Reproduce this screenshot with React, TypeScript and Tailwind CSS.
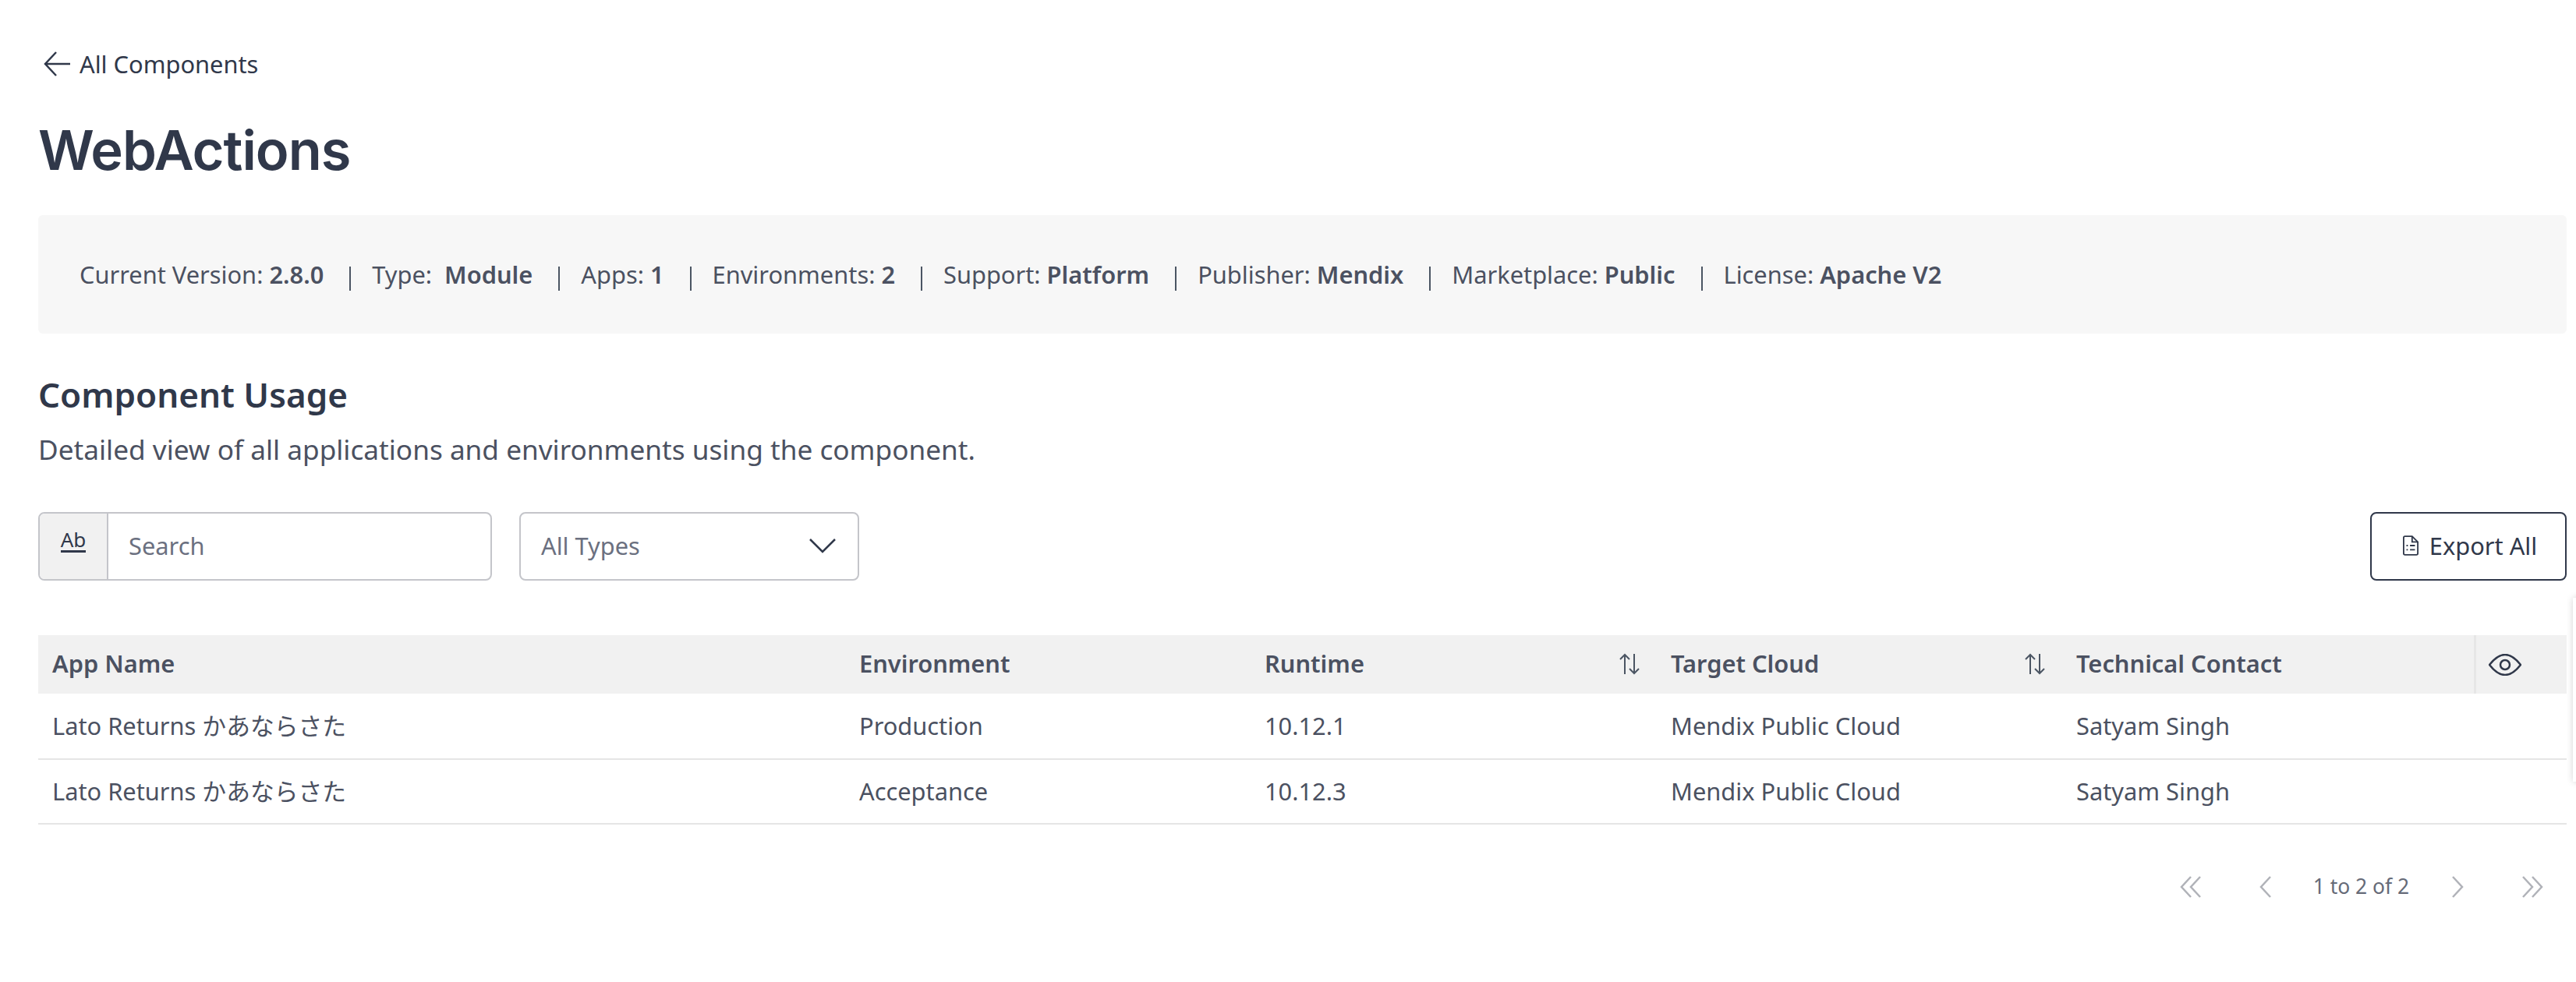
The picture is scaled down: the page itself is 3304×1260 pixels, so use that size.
import React from "react";

const Sep = () => <span className="ml-[33px] mr-[27px] inline-block h-[31px] w-[2px] translate-y-[5px] bg-[#4b5563]" />;

const meta: [string, string][] = [
  ["Current Version: ", "2.8.0"],
  ["Type:  ", "Module"],
  ["Apps: ", "1"],
  ["Environments: ", "2"],
  ["Support: ", "Platform"],
  ["Publisher: ", "Mendix"],
  ["Marketplace: ", "Public"],
  ["License: ", "Apache V2"],
];

const cols = "grid grid-cols-[1037px_520px_521px_520px_526px_119px]";

const SortIcon = () => (
  <svg width="30" height="28" viewBox="0 0 30 28" fill="none" stroke="#4b5563" strokeWidth="2">
    <path d="M9 27V2M3 8l6-6 6 6" />
    <path d="M21 1v25M15 20l6 6 6-6" />
  </svg>
);

const Row = ({ env, rt, first }: { env: string; rt: string; first?: boolean }) => (
  <div className={`${cols} ${first ? "h-[85px]" : "h-[83px]"} items-center border-b-[2px] border-[#e5e5e5] text-[30.8px] text-[#4b5161]`}>
    <div className="pl-[18px]">Lato Returns かあならさた</div>
    <div className="pl-[16px]">{env}</div>
    <div className="pl-[16px]">{rt}</div>
    <div className="pl-[16px]">Mendix Public Cloud</div>
    <div className="pl-[16px]">Satyam Singh</div>
    <div />
  </div>
);

const Pager = ({ d, double }: { d: "l" | "r"; double?: boolean }) => (
  <svg width="28" height="30" viewBox="0 0 28 30" fill="none" stroke="#b0b2b8" strokeWidth="2.5">
    {double ? (
      d === "l" ? (
        <path d="M14 2 2 15l12 13M26 2 14 15l12 13" />
      ) : (
        <path d="m2 2 12 13L2 28M14 2l12 13-12 13" />
      )
    ) : d === "l" ? (
      <path d="M20 2 8 15l12 13" />
    ) : (
      <path d="m8 2 12 13L8 28" />
    )}
  </svg>
);

export default function App() {
  return (
    <div className="relative h-[1260px] w-[3304px] overflow-hidden bg-white pl-[49px] pr-[12px] font-['Noto_Sans','Noto_Sans_CJK_JP',sans-serif] text-[#30384a]">
      <div className="box-content flex h-[44px] items-center pt-[60px]">
        <svg width="38" height="32" viewBox="0 0 38 32" fill="none" stroke="#30384a" strokeWidth="2.5" className="ml-[6px] mr-[9px]">
          <path d="M17 1 3 16l14 15M3 16h32" />
        </svg>
        <span className="text-[30.8px]">All Components</span>
      </div>
      <h1 className="mt-[54px] h-[70px] font-['Inter',sans-serif] text-[70.4px] font-semibold leading-[70px] tracking-[-1px]">WebActions</h1>
      <div className="mt-[48px] flex h-[152px] items-center rounded-[6px] bg-[#f7f7f7] pl-[53px] text-[30.8px] text-[#4b5161] whitespace-pre">
        {meta.map(([k, v], i) => (
          <React.Fragment key={k}>
            {i > 0 && <Sep />}
            <span>{k}<b className="font-semibold">{v}</b></span>
          </React.Fragment>
        ))}
      </div>
      <h2 className="mt-[50px] text-[44px] font-semibold leading-[56px]">Component Usage</h2>
      <p className="mt-[18px] text-[35.2px] leading-[48px] text-[#4b5161]">Detailed view of all applications and environments using the component.</p>

      <div className="mt-[57px] flex h-[88px] items-stretch">
        <div className="flex w-[582px] overflow-hidden rounded-[8px] border-[2px] border-[#c4c5ca]">
          <div className="flex w-[88px] justify-center border-r-[2px] border-[#c4c5ca] bg-[#f1f1f1] pt-[18px] text-[26px] leading-[30px] text-[#30384a]">
            <span className="h-[32px] border-b-[3px] border-[#30384a]">Ab</span>
          </div>
          <div className="flex items-center pb-[2px] pl-[26px] text-[30.8px] text-[#6b7080]">Search</div>
        </div>
        <div className="ml-[35px] flex w-[436px] items-center justify-between rounded-[8px] border-[2px] border-[#c4c5ca] pb-[2px] pl-[26px] pr-[28px] text-[30.8px] text-[#6b7080]">
          <span>All Types</span>
          <svg width="34" height="20" viewBox="0 0 34 20" fill="none" stroke="#30384a" strokeWidth="2.5"><path d="m1 2 16 16L33 2" /></svg>
        </div>
        <div className="ml-auto flex w-[252px] items-center justify-center gap-[14px] rounded-[8px] border-[2px] border-[#30384a] pb-[2px] pl-[4px] text-[30.8px]">
          <svg width="20" height="28" viewBox="0 0 22 28" fill="none" stroke="#30384a" strokeWidth="2">
            <path d="M3 1h10l8 8v16a2 2 0 0 1-2 2H3a2 2 0 0 1-2-2V3a2 2 0 0 1 2-2z" />
            <path d="M13 1v8h8M5 14h2M10 14h7M5 20h2M10 20h7" />
          </svg>
          <span>Export All</span>
        </div>
      </div>

      <div className={`${cols} mt-[70px] h-[75px] items-center bg-[#f1f1f1] pb-[2px] text-[30.8px] font-semibold text-[#4b5161]`}>
        <div className="pl-[18px]">App Name</div>
        <div className="pl-[16px]">Environment</div>
        <div className="flex items-center justify-between pl-[16px] pr-[22px]"><span>Runtime</span><SortIcon /></div>
        <div className="flex items-center justify-between pl-[16px] pr-[22px]"><span>Target Cloud</span><SortIcon /></div>
        <div className="pl-[16px]">Technical Contact</div>
        <div className="-mb-[2px] flex h-[75px] items-center border-l-[3px] border-[#e6e6e6] pl-[16px]">
          <svg width="42" height="28" viewBox="0 0 42 28" fill="none" stroke="#30384a" strokeWidth="2.5">
            <path d="M1 14 C8 5 14 1 21 1s13 4 20 13c-7 9-13 13-20 13S8 23 1 14z" />
            <circle cx="21" cy="14" r="6" />
          </svg>
        </div>
      </div>
      <Row first env="Production" rt="10.12.1" />
      <Row env="Acceptance" rt="10.12.3" />

      <div className="mt-[60px] flex items-center justify-end pr-[30px] text-[26.4px] text-[#666b78]">
        <Pager d="l" double />
        <span className="ml-[68px]"><Pager d="l" /></span>
        <span className="ml-[47px]">1 to 2 of 2</span>
        <span className="ml-[48px]"><Pager d="r" /></span>
        <span className="ml-[68px]"><Pager d="r" double /></span>
      </div>
      <div className="absolute left-[3300px] top-[767px] h-[236px] w-[20px] bg-white shadow-[0_0_8px_rgba(0,0,0,0.18)]" />
    </div>
  );
}
